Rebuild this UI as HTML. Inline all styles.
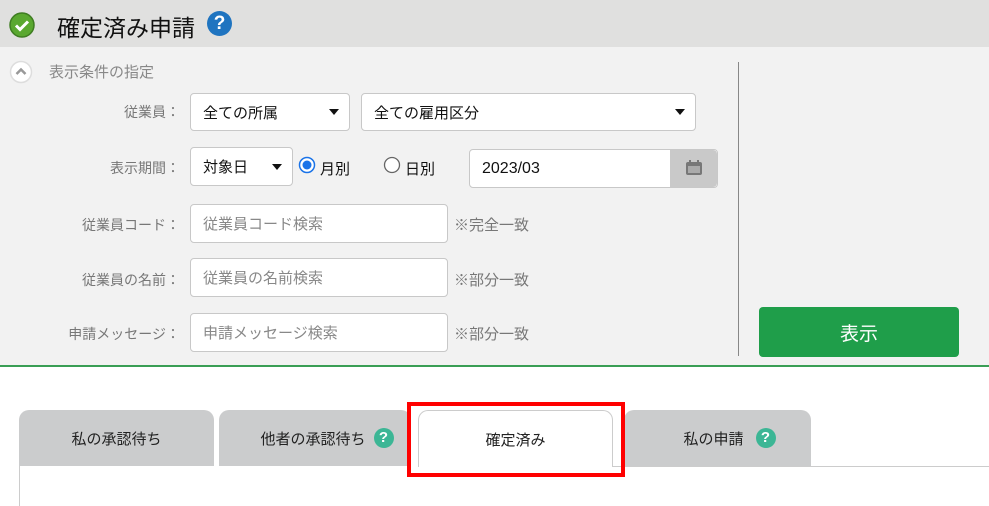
<!DOCTYPE html>
<html><head><meta charset="utf-8"><style>
*{box-sizing:border-box;margin:0;padding:0}
body{width:989px;height:505px;overflow:hidden;background:#fff;font-family:"Liberation Sans","Noto Sans CJK JP",sans-serif;position:relative;color:#222}
.a{position:absolute}
.hdr{left:0;top:0;width:989px;height:47px;background:#e0e0df}
.form{left:0;top:47px;width:989px;height:320px;background:#f2f2f2;border-bottom:2px solid #3a9e55}
.lbl{font-size:14px;color:#777;text-align:right;width:180px;left:0}
.box{background:#fff;border:1px solid #c8c8c8;border-radius:4px;font-size:15px;color:#111;padding-left:12px;display:flex;align-items:center}
.tri{position:absolute;right:10px;top:50%;margin-top:-3px;border-left:5px solid transparent;border-right:5px solid transparent;border-top:6px solid #111}
.note{font-size:15px;color:#777}
.tab{top:410px;height:56px;background:#cbcccd;border-radius:10px 10px 0 0;font-size:15px;color:#222;display:flex;align-items:center;justify-content:center}
.q{display:inline-block;width:20px;height:20px;border-radius:50%;background:#3cb695;color:#fff;font-weight:bold;font-size:15px;text-align:center;line-height:20px;margin-left:8px}
</style></head><body>
<div class="a hdr"></div>
<svg class="a" style="left:9px;top:12px" width="26" height="26"><circle cx="13" cy="13" r="12" fill="#5aa830" stroke="#3f7d22" stroke-width="1.5"/><path d="M7 13.5l4 4 8-8" stroke="#fff" stroke-width="3" fill="none"/></svg>
<div class="a" style="left:57px;top:9px;font-size:23px;color:#111">確定済み申請</div>
<div class="a" style="left:207px;top:11px;width:25px;height:25px;border-radius:50%;background:#1f74c0;color:#fff;font-weight:bold;font-size:19px;text-align:center;line-height:25px">?</div>
<div class="a form"></div>
<svg class="a" style="left:9px;top:60px" width="24" height="24"><circle cx="12" cy="12" r="10.5" fill="#fff" stroke="#ddd" stroke-width="1.5"/><path d="M7.5 14l4.5-4.5 4.5 4.5" stroke="#999" stroke-width="2.5" fill="none"/></svg>
<div class="a" style="left:49px;top:61px;font-size:15px;color:#888">表示条件の指定</div>
<div class="a" style="left:738px;top:62px;width:1px;height:294px;background:#888"></div>

<div class="a lbl" style="top:102px">従業員：</div>
<div class="a box" style="left:190px;top:93px;width:160px;height:38px">全ての所属<span class="tri"></span></div>
<div class="a box" style="left:361px;top:93px;width:335px;height:38px">全ての雇用区分<span class="tri"></span></div>

<div class="a lbl" style="top:158px">表示期間：</div>
<div class="a box" style="left:190px;top:147px;width:103px;height:39px">対象日<span class="tri"></span></div>
<svg class="a" style="left:298px;top:156px" width="18" height="18"><circle cx="9" cy="9" r="7.5" fill="#fff" stroke="#1a73e8" stroke-width="1.5"/><circle cx="9" cy="9" r="4.5" fill="#1a73e8"/></svg>
<div class="a" style="left:320px;top:158px;font-size:15px;color:#111">月別</div>
<svg class="a" style="left:383px;top:156px" width="18" height="18"><circle cx="9" cy="9" r="7.5" fill="#fff" stroke="#666" stroke-width="1.3"/></svg>
<div class="a" style="left:405px;top:158px;font-size:15px;color:#111">日別</div>
<div class="a box" style="left:469px;top:149px;width:249px;height:39px;overflow:hidden;font-size:16px">2023/03</div>
<div class="a" style="left:670px;top:150px;width:47px;height:37px;background:#c9c9c9;border-radius:0 4px 4px 0"></div>
<svg class="a" style="left:685px;top:159px" width="18" height="18"><rect x="1" y="3" width="16" height="13" rx="2" fill="#777"/><rect x="3" y="7" width="12" height="7" fill="#aaa"/><rect x="4" y="1" width="2" height="4" fill="#777"/><rect x="12" y="1" width="2" height="4" fill="#777"/></svg>

<div class="a lbl" style="top:215px">従業員コード：</div>
<div class="a box" style="left:190px;top:204px;width:258px;height:39px;color:#888">従業員コード検索</div>
<div class="a note" style="left:454px;top:214px">※完全一致</div>

<div class="a lbl" style="top:270px">従業員の名前：</div>
<div class="a box" style="left:190px;top:258px;width:258px;height:39px;color:#888">従業員の名前検索</div>
<div class="a note" style="left:454px;top:269px">※部分一致</div>

<div class="a lbl" style="top:324px">申請メッセージ：</div>
<div class="a box" style="left:190px;top:313px;width:258px;height:39px;color:#888">申請メッセージ検索</div>
<div class="a note" style="left:454px;top:323px">※部分一致</div>

<div class="a" style="left:759px;top:307px;width:200px;height:50px;background:#1f9e4a;border-radius:4px;color:#fff;font-size:19px;display:flex;align-items:center;justify-content:center">表示</div>

<div class="a" style="left:613px;top:466px;width:376px;height:1px;background:#ccc"></div>
<div class="a" style="left:19px;top:466px;width:1px;height:40px;background:#ccc"></div>
<div class="a tab" style="left:19px;width:195px">私の承認待ち</div>
<div class="a tab" style="left:219px;width:192px;padding-left:24px">他者の承認待ち<span class="q">?</span></div>
<div class="a tab" style="left:418px;width:195px;background:#fff;border:1px solid #ccc;border-bottom:none;height:57px">確定済み</div>
<div class="a tab" style="left:624px;width:187px;padding-left:24px">私の申請<span class="q" style="margin-left:12px">?</span></div>
<div class="a" style="left:407px;top:402px;width:218px;height:75px;border:4px solid #f00"></div>
</body></html>
